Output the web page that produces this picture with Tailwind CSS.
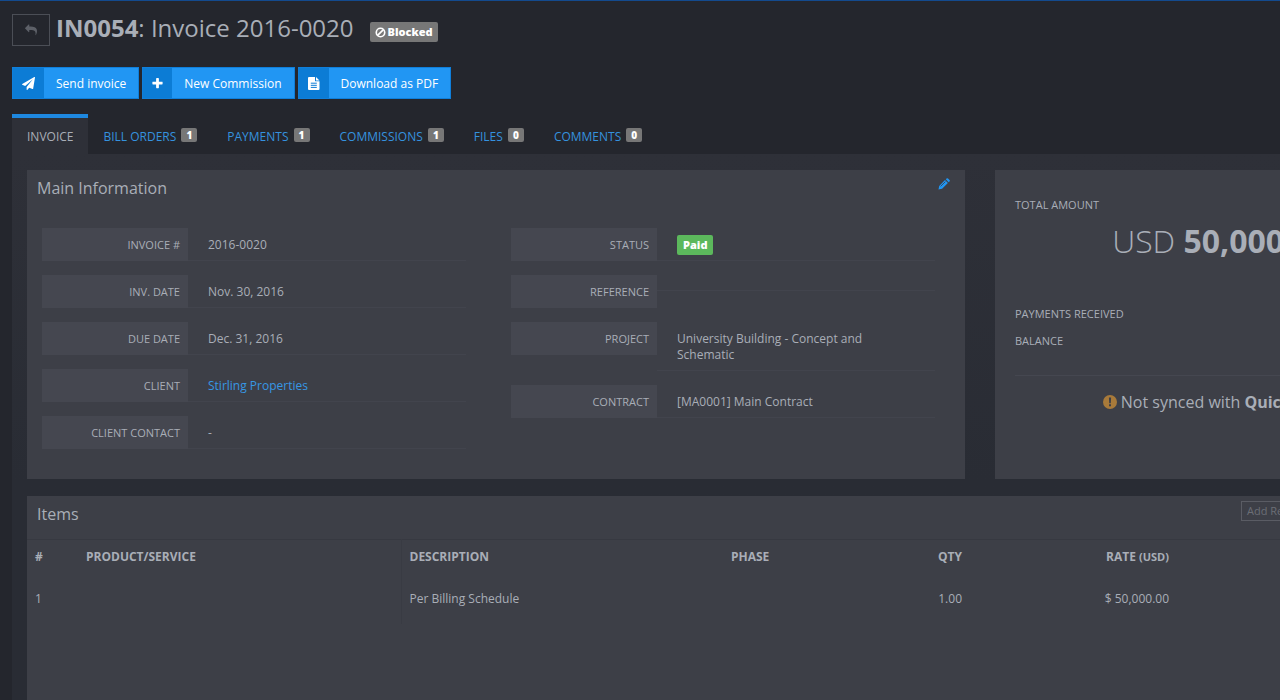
<!DOCTYPE html>
<html lang="en">
<head>
  <meta charset="UTF-8" />
  <meta name="viewport" content="width=device-width, initial-scale=1.0"/>
  <title>IN0054: Invoice 2016-0020</title>
  <script src="https://cdn.jsdelivr.net/npm/@tailwindcss/browser@4"></script>
</head>
<body class="bg-[#24262d] text-[#a9aeb7] font-['Open_Sans',sans-serif] text-[12px] leading-4 min-h-screen overflow-x-hidden flex flex-col border-t border-[#134a8e]">
  <header class="pl-3 pt-[13px]">
    <div class="flex items-start">
      <button type="button" aria-label="Back" class="w-[38px] h-8 border border-[#4b4e56] flex items-center justify-center text-[#5d6068]">
        <svg class="w-3 h-3 fill-current" viewBox="0 0 1792 1792"><path transform="translate(1792 0) scale(-1 1)" d="M1792 640q0 26-19 45l-512 512q-19 19-45 19t-45-19-19-45v-256h-224q-98 0-175.5 6t-154 21.5-133 42.5-105.5 69.5-80 101-48.5 138.5-17.5 181q0 55 5 123 0 6 2.5 23.5t2.5 26.5q0 15-8.5 25t-23.5 10q-16 0-28-17-7-9-13-22t-13.5-30-10.5-24q-127-285-127-451 0-199 53-333 162-403 875-403h224v-256q0-26 19-45t45-19 45 19l512 512q19 19 19 45z"/></svg>
      </button>
      <h1 class="ml-[6px] text-[24px] leading-7"><b class="font-bold">IN0054</b>: Invoice 2016-0020</h1>
      <span class="ml-4 mt-2 h-5 px-[5px] rounded-xs bg-[#777] text-white text-[11px] font-extrabold flex items-center gap-[2px]">
        <svg class="w-[11px] h-[11px]" viewBox="0 0 12 12" fill="none" stroke="currentColor" stroke-width="1.8"><circle cx="6" cy="6" r="4.6"/><path d="M2.8 9.2l6.4-6.4"/></svg>
        Blocked
      </span>
    </div>

    <div class="flex gap-[3px] mt-[21px] text-white font-medium">
      <button type="button" class="h-8 flex border border-[#0f7fdb] bg-[#2196f3]">
        <span class="w-[31px] h-full bg-[#0c7cd5] flex items-center justify-center">
          <svg class="w-[13px] h-[13px] fill-current" viewBox="0 0 1792 1792"><path d="M1764 11q33 24 27 64l-256 1536q-5 29-32 45-14 8-31 8-11 0-24-5l-453-185-242 295q-18 23-49 23-13 0-22-4-19-7-30.5-23.5t-11.5-36.5v-349l864-1059-1069 925-395-162q-37-14-40-55-2-40 32-59l1664-960q15-9 32-9 20 0 36 11z"/></svg>
        </span>
        <span class="px-3 leading-8">Send invoice</span>
      </button>
      <button type="button" class="h-8 flex border border-[#0f7fdb] bg-[#2196f3]">
        <span class="w-[29px] h-full bg-[#0c7cd5] flex items-center justify-center">
          <svg class="w-[13px] h-[13px] fill-current" viewBox="0 0 1792 1792"><path d="M1600 736v192q0 40-28 68t-68 28h-416v416q0 40-28 68t-68 28h-192q-40 0-68-28t-28-68v-416h-416q-40 0-68-28t-28-68v-192q0-40 28-68t68-28h416v-416q0-40 28-68t68-28h192q40 0 68 28t28 68v416h416q40 0 68 28t28 68z"/></svg>
        </span>
        <span class="px-3 leading-8">New Commission</span>
      </button>
      <button type="button" class="h-8 flex border border-[#0f7fdb] bg-[#2196f3]">
        <span class="w-[30px] h-full bg-[#0c7cd5] flex items-center justify-center">
          <svg class="w-3 h-[13px]" viewBox="0 0 12 13"><path fill="currentColor" d="M1 0h6v4.3h4.5V12a1 1 0 0 1-1 1H1a1 1 0 0 1-1-1V1a1 1 0 0 1 1-1zM8 0l3.5 3.4H8z"/><path stroke="#0c7cd5" d="M2.8 6.2h6M2.8 8.3h6M2.8 10.4h6"/></svg>
        </span>
        <span class="px-3 leading-8">Download as PDF</span>
      </button>
    </div>
  </header>

  <nav class="flex pl-3 mt-[15px] text-[#3592df] uppercase leading-[18px]">
    <a href="#invoice" class="h-10 px-[15px] pt-[10px] border-t-4 border-[#1e88e0] bg-[#2e3038] text-[#a9aeb7]">Invoice</a>
    <a href="#orders" class="h-10 px-[15px] pt-[14px] flex items-start gap-[5px]">Bill Orders <span class="w-4 h-[14px] rounded-xs bg-[#777] text-white text-[10px] leading-[14px] font-extrabold text-center">1</span></a>
    <a href="#payments" class="h-10 px-[15px] pt-[14px] flex items-start gap-[5px]">Payments <span class="w-4 h-[14px] rounded-xs bg-[#777] text-white text-[10px] leading-[14px] font-extrabold text-center">1</span></a>
    <a href="#commissions" class="h-10 px-[15px] pt-[14px] flex items-start gap-[5px]">Commissions <span class="w-4 h-[14px] rounded-xs bg-[#777] text-white text-[10px] leading-[14px] font-extrabold text-center">1</span></a>
    <a href="#files" class="h-10 px-[15px] pt-[14px] flex items-start gap-[5px]">Files <span class="w-4 h-[14px] rounded-xs bg-[#777] text-white text-[10px] leading-[14px] font-extrabold text-center">0</span></a>
    <a href="#comments" class="h-10 px-[15px] pt-[14px] flex items-start gap-[5px]">Comments <span class="w-4 h-[14px] rounded-xs bg-[#777] text-white text-[10px] leading-[14px] font-extrabold text-center">0</span></a>
  </nav>

  <main class="grow ml-3 min-w-[1450px] px-[15px] pt-4 bg-linear-to-b from-[#2e3038] to-[#292c34] to-60% flex flex-col">
    <div class="grid grid-cols-[938fr_452fr] gap-[30px] mb-[17px]">
      <section class="bg-[#3d3f47] pb-[30px]">
        <div class="flex justify-between pl-[10px] pr-[15px] pt-2">
          <h2 class="text-[16px] leading-5">Main Information</h2>
          <button type="button" aria-label="Edit" class="h-3 text-[#2196f3]">
            <svg class="w-3 h-3" viewBox="0 0 12 12"><path fill="currentColor" d="M.5 11.5l.7-3.6L7 2.1 9.9 5 4.1 10.8zM7.8 1.3l.8-.8a1 1 0 0 1 1.4 0l1.5 1.5a1 1 0 0 1 0 1.4l-.8.8z"/><path stroke="#3d3f47" stroke-width=".8" d="M2.6 8.4l4.8-4.8"/></svg>
          </button>
        </div>
        <div class="grid grid-cols-2 mt-[30px]">
          <dl class="pl-[15px] pr-[30px] flex flex-col gap-[14px]">
            <div class="flex items-start">
              <dt class="w-[146px] px-2 pt-[9px] pb-2 bg-[#454750] text-right text-[11px]">INVOICE #</dt>
              <dd class="grow basis-0 px-5 pt-[9px] pb-[7px] border-b border-[#42444d]">2016-0020</dd>
            </div>
            <div class="flex items-start">
              <dt class="w-[146px] px-2 pt-[9px] pb-2 bg-[#454750] text-right text-[11px]">INV. DATE</dt>
              <dd class="grow basis-0 px-5 pt-[9px] pb-[7px] border-b border-[#42444d]">Nov. 30, 2016</dd>
            </div>
            <div class="flex items-start">
              <dt class="w-[146px] px-2 pt-[9px] pb-2 bg-[#454750] text-right text-[11px]">DUE DATE</dt>
              <dd class="grow basis-0 px-5 pt-[9px] pb-[7px] border-b border-[#42444d]">Dec. 31, 2016</dd>
            </div>
            <div class="flex items-start">
              <dt class="w-[146px] px-2 pt-[9px] pb-2 bg-[#454750] text-right text-[11px]">CLIENT</dt>
              <dd class="grow basis-0 px-5 pt-[9px] pb-[7px] border-b border-[#42444d]"><a href="#client" class="text-[#3797e4]">Stirling Properties</a></dd>
            </div>
            <div class="flex items-start">
              <dt class="w-[146px] px-2 pt-[9px] pb-2 bg-[#454750] text-right text-[11px]">CLIENT CONTACT</dt>
              <dd class="grow basis-0 px-5 pt-[9px] pb-[7px] border-b border-[#42444d]">-</dd>
            </div>
          </dl>
          <dl class="pl-[15px] pr-[30px] flex flex-col gap-[14px]">
            <div class="flex items-start">
              <dt class="w-[146px] px-2 pt-[9px] pb-2 bg-[#454750] text-right text-[11px]">STATUS</dt>
              <dd class="grow basis-0 px-5 pt-[7px] pb-[5px] border-b border-[#42444d] flex"><span class="h-5 px-[6px] rounded-xs bg-[#5cb85c] text-white text-[11px] leading-5 font-extrabold">Paid</span></dd>
            </div>
            <div class="flex items-start">
              <dt class="w-[146px] px-2 pt-[9px] pb-2 bg-[#454750] text-right text-[11px]">REFERENCE</dt>
              <dd class="grow basis-0 px-5 pt-2 pb-[7px] border-b border-[#42444d]"></dd>
            </div>
            <div class="flex items-start">
              <dt class="w-[146px] px-2 pt-[9px] pb-2 bg-[#454750] text-right text-[11px]">PROJECT</dt>
              <dd class="grow basis-0 px-5 pt-[9px] pb-[7px] border-b border-[#42444d]">University Building - Concept and Schematic</dd>
            </div>
            <div class="flex items-start">
              <dt class="w-[146px] px-2 pt-[9px] pb-2 bg-[#454750] text-right text-[11px]">CONTRACT</dt>
              <dd class="grow basis-0 px-5 pt-[9px] pb-[7px] border-b border-[#42444d]">[MA0001] Main Contract</dd>
            </div>
          </dl>
        </div>
      </section>

      <section class="bg-[#3d3f47] px-5 pt-[27px]">
        <h2 class="text-[11px]">TOTAL AMOUNT</h2>
        <p class="text-[32px] leading-10 font-light text-center mt-2">USD <b class="font-bold">50,000.00</b></p>
        <dl class="mt-[45px] text-[11px] flex flex-col gap-[11px]">
          <div class="flex justify-between"><dt>PAYMENTS RECEIVED</dt></div>
          <div class="flex justify-between"><dt>BALANCE</dt></div>
        </dl>
        <p class="mt-[26px] pt-[15px] border-t border-[#454750] text-[16px] leading-[22px] flex items-center justify-center gap-1">
          <svg class="w-[14px] h-[14px]" viewBox="0 0 14 14"><circle cx="7" cy="7" r="7" fill="#a87a3a"/><path fill="#3d3f47" d="M5.9 2.6h2.2l-.3 5.6H6.2zM6 9.3h2v2H6z"/></svg>
          <span>Not synced with <b class="font-bold">QuickBooks</b></span>
        </p>
      </section>
    </div>

    <section class="bg-[#3d3f47] grow">
      <div class="flex items-start pl-[10px] pt-[5px] h-[43px]">
        <h2 class="text-[16px] leading-[22px] pt-[2px] w-[1204px]">Items</h2>
        <button type="button" class="h-5 px-[5px] border border-[#5a5c64] text-[#6b6e76] text-[11px] leading-[18px] whitespace-nowrap">Add Retainer</button>
      </div>
      <table class="w-full table-fixed border-t border-[#373941]">
        <thead>
          <tr class="h-[34px] text-left">
            <th class="w-[51px] pl-2 font-bold">#</th>
            <th class="w-[323px] pl-2 font-bold">PRODUCT/SERVICE</th>
            <th class="w-[322px] pl-2 font-bold border-l border-[#393b43]">DESCRIPTION</th>
            <th class="w-[133px] pl-2 font-bold">PHASE</th>
            <th class="w-[114px] pr-2 font-bold text-right">QTY</th>
            <th class="w-[207px] pr-2 font-bold text-right">RATE <small class="text-[11px]">(USD)</small></th>
            <th></th>
          </tr>
        </thead>
        <tbody>
          <tr class="h-[50px]">
            <td class="pl-2">1</td>
            <td></td>
            <td class="pl-2 border-l border-[#393b43]">Per Billing Schedule</td>
            <td></td>
            <td class="pr-2 text-right">1.00</td>
            <td class="pr-2 text-right">$ 50,000.00</td>
            <td></td>
          </tr>
        </tbody>
      </table>
    </section>
  </main>
</body>
</html>
